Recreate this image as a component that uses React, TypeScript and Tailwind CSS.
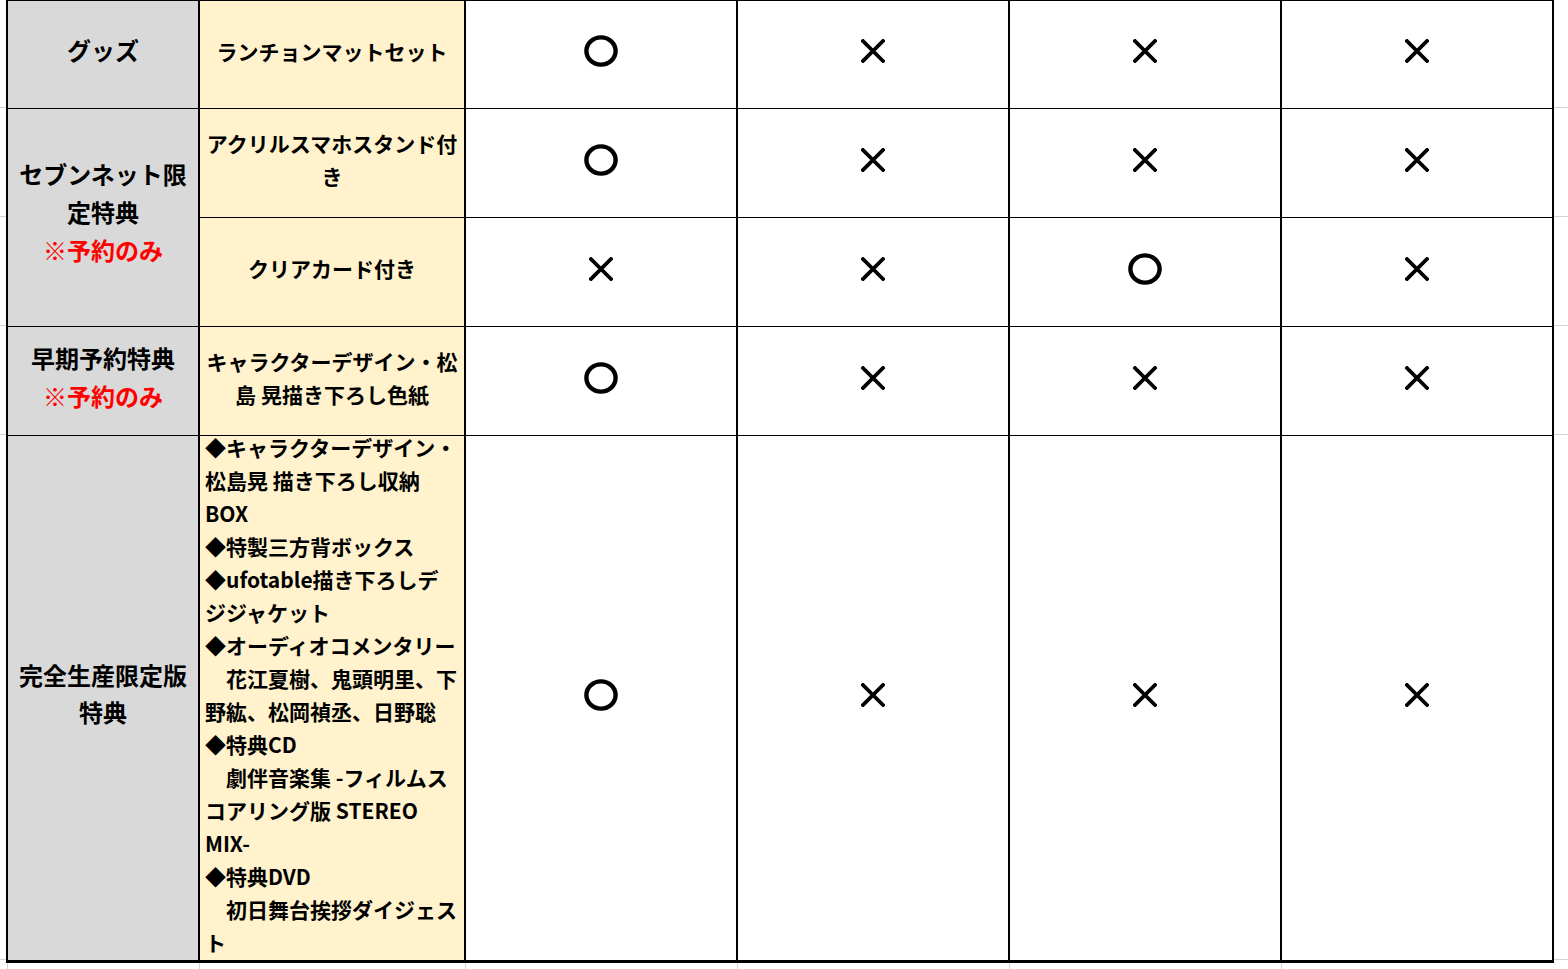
const cols = "grid-cols-[190px_264px_270px_270px_270px_270px]"

type Mark = "o" | "x"

const marks: Mark[][] = [
  ["o", "x", "x", "x"],
  ["o", "x", "x", "x"],
  ["x", "x", "o", "x"],
  ["o", "x", "x", "x"],
  ["o", "x", "x", "x"]
]

const bigLines = [
  "◆キャラクターデザイン・",
  "松島晃 描き下ろし収納",
  "BOX",
  "◆特製三方背ボックス",
  "◆ufotable描き下ろしデ",
  "ジジャケット",
  "◆オーディオコメンタリー",
  "　花江夏樹、鬼頭明里、下",
  "野紘、松岡禎丞、日野聡",
  "◆特典CD",
  "　劇伴音楽集 -フィルムス",
  "コアリング版 STEREO",
  "MIX-",
  "◆特典DVD",
  "　初日舞台挨拶ダイジェス",
  "ト"
]

function Circle() {
  return (
    <svg width="34" height="32" viewBox="0 0 34 32">
      <ellipse cx="17" cy="16" rx="14.6" ry="13.6" fill="none" stroke="#000" strokeWidth="4.4" />
    </svg>
  )
}

function Cross() {
  return (
    <svg width="24" height="24" viewBox="0 0 24 24">
      <path d="M2 2 L22 22 M22 2 L2 22" stroke="#000" strokeWidth="3.8" strokeLinecap="square" />
    </svg>
  )
}

function MarkCell({ mark }: { mark: Mark }) {
  return (
    <div className="flex items-center justify-center bg-white pb-[7px]">
      {mark === "o" ? <Circle /> : <Cross />}
    </div>
  )
}

function Head({ lines, red }: { lines: string[]; red?: boolean }) {
  return (
    <div className="flex flex-col items-center justify-center bg-[#d9d9d9] pb-[9px] text-[24px] leading-[38px]">
      {lines.map((l) => (
        <div key={l} className="whitespace-nowrap">{l}</div>
      ))}
      {red && <div className="whitespace-nowrap text-[#ff0000]">※予約のみ</div>}
    </div>
  )
}

function Item({ lines }: { lines: string[] }) {
  return (
    <div className="flex flex-col items-center justify-center bg-[#fff2cc] pb-[7px] text-[21px] leading-[33px]">
      {lines.map((l) => (
        <div key={l} className="whitespace-nowrap">{l}</div>
      ))}
    </div>
  )
}

const rowHeights = ["h-[108px]", "h-[109px]", "h-[109px]", "h-[109px]", "h-[525px]"]

export default function App() {
  return (
    <div className="flex h-[969px] w-[1568px] flex-col overflow-hidden bg-white font-['Noto_Sans_CJK_JP','Noto_Sans',sans-serif] font-bold text-black">
      <div className="flex">
        <div className="flex w-[6px] flex-col">
          {rowHeights.map((h, i) => (
            <div key={i} className={`${h} border-b border-[#d4d4d4]`} />
          ))}
        </div>

        <div className={`grid ${cols} grid-rows-[107px_108px_108px_108px_524px] gap-x-[2px] gap-y-px bg-black pt-px pr-[2px] pb-[3px] pl-[2px]`}>
          <Head lines={["グッズ"]} />
          <Item lines={["ランチョンマットセット"]} />
          {marks[0].map((m, i) => <MarkCell key={i} mark={m} />)}

          <div className="row-span-2 flex flex-col items-center justify-center bg-[#d9d9d9] pb-[12px] text-[24px] leading-[38px]">
            <div>セブンネット限</div>
            <div>定特典</div>
            <div className="text-[#ff0000]">※予約のみ</div>
          </div>
          <Item lines={["アクリルスマホスタンド付", "き"]} />
          {marks[1].map((m, i) => <MarkCell key={i} mark={m} />)}

          <Item lines={["クリアカード付き"]} />
          {marks[2].map((m, i) => <MarkCell key={i} mark={m} />)}

          <Head lines={["早期予約特典"]} red />
          <Item lines={["キャラクターデザイン・松", "島 晃描き下ろし色紙"]} />
          {marks[3].map((m, i) => <MarkCell key={i} mark={m} />)}

          <div className="flex flex-col items-center justify-center bg-[#d9d9d9] pb-[10px] text-[24px] leading-[37px]">
            <div>完全生産限定版</div>
            <div>特典</div>
          </div>
          <div className="flex flex-col justify-center overflow-visible bg-[#fff2cc] pb-[6px] pl-[5px] text-[21px] leading-[33px]">
            {bigLines.map((l, i) => (
              <div key={i} className="whitespace-pre">{l}</div>
            ))}
          </div>
          {marks[4].map((m, i) => <MarkCell key={i} mark={m} />)}
        </div>

        <div className="flex flex-1 flex-col">
          {rowHeights.map((h, i) => (
            <div key={i} className={`${h} border-b border-[#d4d4d4]`} />
          ))}
        </div>
      </div>

      <div className={`grid ${cols} ml-[7px] h-[6px] gap-x-[2px]`}>
        {Array.from({ length: 6 }).map((_, i) => (
          <div key={i} className="border-l border-[#d4d4d4]" />
        ))}
      </div>
    </div>
  )
}
